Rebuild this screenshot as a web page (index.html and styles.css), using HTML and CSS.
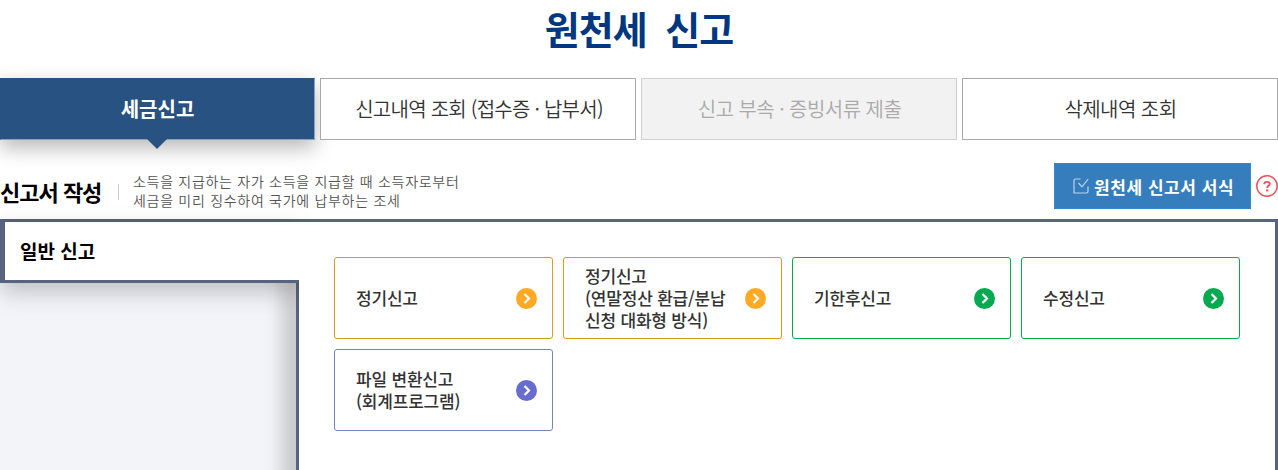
FILE: index.html
```html
<!DOCTYPE html>
<html lang="ko">
<head>
<meta charset="utf-8">
<title>원천세 신고</title>
<link rel="stylesheet" href="styles.css">
</head>
<body>
<h1 class="page-title">원천세 신고</h1>
<nav class="tabs">
  <a class="tab tab-active"><span>세금신고</span></a>
  <a class="tab tab-history"><span>신고내역 조회 (접수증 · 납부서)</span></a>
  <a class="tab tab-disabled"><span>신고 부속 · 증빙서류 제출</span></a>
  <a class="tab tab-deleted"><span>삭제내역 조회</span></a>
</nav>
<header class="section-head">
  <h2 class="section-title">신고서 작성</h2>
  <p class="section-desc">소득을 지급하는 자가 소득을 지급할 때 소득자로부터<br>세금을 미리 징수하여 국가에 납부하는 조세</p>
  <a class="form-button">
    <svg class="check-icon" width="16" height="16" viewBox="0 0 16 16" fill="none" stroke="currentColor" stroke-width="1.2"><path d="M7.5 1H2.5Q1 1 1 2.5V15H13.5Q15 15 15 13.5V8.5M5.5 5L9 8.8L15.2 1"/></svg>
    <span>원천세 신고서 서식</span>
  </a>
  <svg class="help-icon" width="22" height="22" viewBox="0 0 22 22" fill="none" stroke="currentColor"><circle cx="11" cy="11" r="10.2" stroke-width="1.5"/><path d="M8.3 9.2V8.9Q8.3 6.9 11 6.9Q13.8 6.9 13.8 8.9Q13.8 10.1 12.3 10.8Q11.2 11.3 11.2 13" stroke-width="1.9"/><path d="M10.1 15.4H12.3" stroke-width="2"/></svg>
</header>
<main class="panel">
  <aside class="side"><div class="side-item">일반 신고</div><div class="side-rest"></div></aside>
  <section class="cards">
    <a class="card amber"><span>정기신고</span><svg class="go" viewBox="0 0 22 22"><circle cx="11.5" cy="11.5" r="10.5"/><path d="M9.5 7L14 11.5L9.5 16"/></svg></a>
    <a class="card amber"><span>정기신고<br>(연말정산 환급/분납<br>신청 대화형 방식)</span><svg class="go" viewBox="0 0 22 22"><circle cx="11.5" cy="11.5" r="10.5"/><path d="M9.5 7L14 11.5L9.5 16"/></svg></a>
    <a class="card green"><span>기한후신고</span><svg class="go" viewBox="0 0 22 22"><circle cx="11.5" cy="11.5" r="10.5"/><path d="M9.5 7L14 11.5L9.5 16"/></svg></a>
    <a class="card green"><span>수정신고</span><svg class="go" viewBox="0 0 22 22"><circle cx="11.5" cy="11.5" r="10.5"/><path d="M9.5 7L14 11.5L9.5 16"/></svg></a>
    <a class="card indigo"><span>파일 변환신고<br>(회계프로그램)</span><svg class="go" viewBox="0 0 22 22"><circle cx="11.5" cy="11.5" r="10.5"/><path d="M9.5 7L14 11.5L9.5 16"/></svg></a>
  </section>
</main>
</body>
</html>
```
FILE: styles.css
```css
* { box-sizing: border-box; }
body {
  margin: 0;
  height: 470px;
  overflow: hidden;
  display: flex;
  flex-direction: column;
  background: #fff;
  color: #333;
  font-family: "Noto Sans CJK KR", sans-serif;
}
h1, h2, p { margin: 0; }
.page-title {
  height: 78px;
  text-align: center;
  font-size: 38px;
  line-height: 56px;
  letter-spacing: -1px;
  word-spacing: 9px;
  color: #003781;
}
.tabs { display: grid; grid-template-columns: 315px 316px 316px 316px; gap: 5px; height: 62px; }
.tab {
  display: flex;
  align-items: center;
  justify-content: center;
  padding-left: 1px;
  border: 1px solid #aaa;
  font-size: 20px;
  font-weight: 350;
  letter-spacing: -0.55px;
  line-height: 30px;
}
.tab-active {
  position: relative;
  padding-left: 0;
  border-color: #275282 #8ba1bd #8ba1bd #275282;
  background: #275282;
  color: #fff;
  font-weight: 700;
  letter-spacing: 0;
  box-shadow: 0 8px 20px rgba(0, 0, 0, .28);
}
.tab-active::after {
  content: "";
  position: absolute;
  left: 146px;
  top: 60px;
  border: solid transparent;
  border-width: 10px 10px 0;
  border-top-color: #275282;
}
.tab-history, .tab-disabled, .tab-deleted { background: #fff; }
.tab-history { position: relative; padding-left: 2px; letter-spacing: -0.75px; }
.tab-disabled { border-color: #d0d0d0; background: #f2f2f2; color: #aaa; }
.section-head { display: flex; height: 79px; padding-top: 23px; }
.section-title {
  width: 119px;
  height: 16px;
  margin-top: 21px;
  border-right: 1px solid #ccc;
  color: #000;
  font-size: 22px;
  line-height: 15px;
  letter-spacing: -1px;
  white-space: nowrap;
}
.section-desc {
  margin: 9px 0 0 14px;
  font-size: 14px;
  font-weight: 350;
  line-height: 19px;
  letter-spacing: .7px;
  color: #555;
}
.form-button {
  display: flex;
  align-items: center;
  width: 197px;
  height: 46px;
  margin-left: auto;
  padding: 2px 0 0 18px;
  gap: 5px;
  border: 1px solid #3089ce;
  background: #367dbd;
  color: #fff;
  font-size: 17px;
  font-weight: 700;
  line-height: 24px;
  letter-spacing: .55px;
  white-space: nowrap;
}
.check-icon { flex: none; color: #b9d5ec; margin-top: -2px; }
.help-icon { margin: 12px 0 0 5px; color: #e95258; }
.panel { display: flex; flex: 1; border: solid #57647f; border-width: 3px 3px 0 0; }
.side { width: 299px; display: flex; flex-direction: column; }
.side-item {
  position: relative;
  height: 61px;
  padding-left: 15px;
  border: solid #57647f;
  border-width: 0 0 3px 5px;
  box-shadow: 0 8px 25px rgba(0, 0, 0, .23);
  color: #000;
  font-size: 19px;
  font-weight: 700;
  line-height: 57px;
}
.side-rest {
  flex: 1;
  border-right: 3px solid #57647f;
  background: linear-gradient(to left, #cbcccd, #cfd0d1 6px, #dfe0e3 15px, #eef0f4 24px, #f2f4fa 34px);
}
.cards {
  position: relative;
  display: grid;
  flex: 1;
  grid-template-columns: repeat(4, 219px);
  grid-auto-rows: 82px;
  gap: 10px;
  padding: 35px;
  background: #fff;
}
.card {
  display: flex;
  align-items: center;
  justify-content: space-between;
  padding: 0 15px 0 21px;
  border: 1px solid;
  border-radius: 3px;
  color: #333;
  font-size: 17px;
  font-weight: 500;
  line-height: 22px;
  letter-spacing: -.2px;
  white-space: nowrap;
}
.go { width: 22px; height: 22px; flex: none; overflow: visible; }
.go path { fill: none; stroke: #fff; stroke-width: 2.2; }
.amber { border-color: #d59d1b; }
.amber circle { fill: #ffa925; }
.green { border-color: #08a94f; }
.green circle { fill: #05aa50; }
.indigo { border-color: #7484bd; }
.indigo circle { fill: #666dce; }
```
